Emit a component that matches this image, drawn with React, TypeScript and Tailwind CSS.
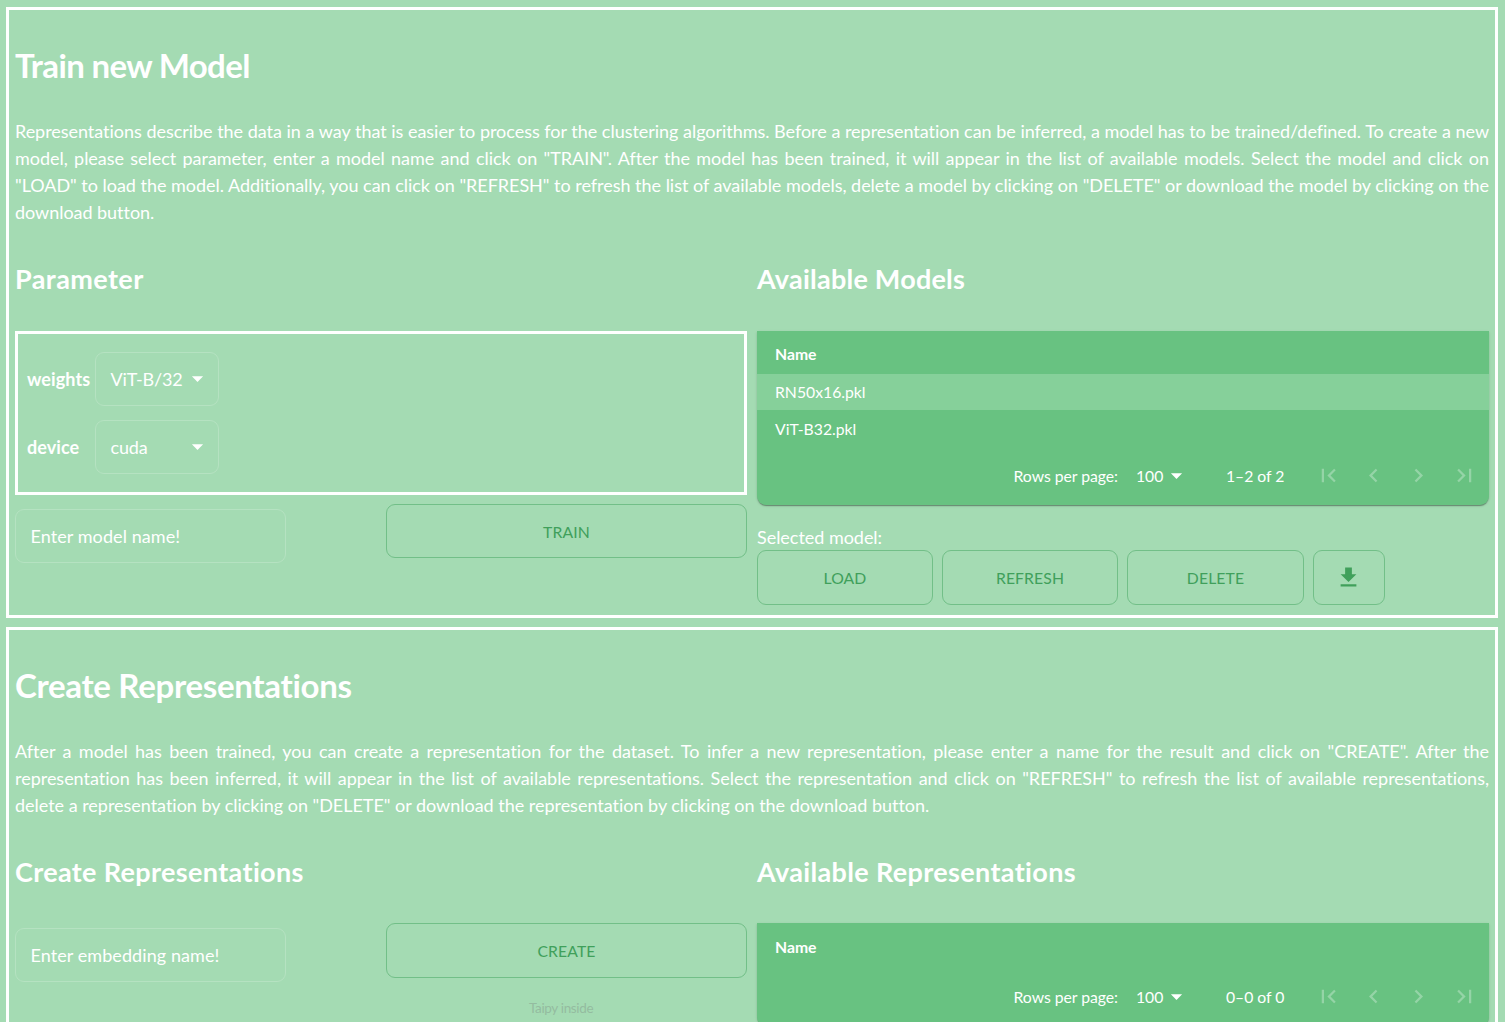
import type { ReactNode } from "react";

const DROP = "M7 10l5 5 5-5z";
const FIRST = "M18.41 16.59L13.82 12l4.59-4.59L17 6l-6 6 6 6zM6 6h2v12H6z";
const PREV = "M15.41 7.41L14 6l-6 6 6 6 1.41-1.41L10.83 12z";
const NEXT = "M10 6L8.59 7.41 13.17 12l-4.58 4.59L10 18l6-6z";
const LAST = "M5.59 7.41L10.18 12l-4.59 4.59L7 18l6-6-6-6zM16 6h2v12h-2z";
const DOWNLOAD = "M19 9h-4V3H9v6H5l7 7 7-7zM5 18v2h14v-2H5z";

function Icon({ d, className = "" }: { d: string; className?: string }) {
  return (
    <svg viewBox="0 0 24 24" className={`size-[27px] shrink-0 fill-current ${className}`}>
      <path d={d} />
    </svg>
  );
}

type PanelProps = { title: string; titleClass: string; text: string; textClass: string; children: ReactNode; className: string };

function Panel({ title, titleClass, text, textClass, children, className }: PanelProps) {
  return (
    <section className={`ml-[6px] w-[1492px] shrink-0 border-[3px] border-white px-[6px] ${className}`}>
      <h1 className={`mt-[30px] h-[50px] text-[33px] leading-[50px] font-bold ${titleClass}`}>{title}</h1>
      <p className={`mt-[28px] text-justify text-[18px] leading-[27px] ${textClass}`}>{text}</p>
      <div className="grid grid-cols-2 gap-x-[10px]">{children}</div>
    </section>
  );
}

function Heading({ children, className }: { children: ReactNode; className: string }) {
  return <h2 className={`mt-[33px] h-[40px] text-[27px] leading-[40px] font-bold ${className}`}>{children}</h2>;
}

function Button({ children, className }: { children: ReactNode; className: string }) {
  return (
    <button className={`flex items-center justify-center rounded-[9px] border border-[#72bf88] pt-px text-[15.75px] tracking-[0.1px] text-[#40a05b] ${className}`}>
      {children}
    </button>
  );
}

function Field({ placeholder, className }: { placeholder: string; className: string }) {
  return (
    <input
      placeholder={placeholder}
      className={`h-[54px] w-[271px] rounded-[9px] border border-[#b5e2c1] px-[14.5px] text-[18px] tracking-[0.08px] text-white outline-none placeholder:text-white ${className}`}
    />
  );
}

function Select({ label, value }: { label: string; value: string }) {
  return (
    <div className="flex h-[54px] items-center">
      <b className="w-[68px] text-[18px] tracking-[0.08px]">{label}</b>
      <div className="flex h-full w-[124px] items-center justify-between rounded-[9px] border border-[#b5e2c1] pr-[7px] pl-[14.5px] text-[18px] tracking-[-0.15px] whitespace-nowrap">
        <span className="w-[72px]">{value}</span>
        <Icon d={DROP} className="mb-[2px]" />
      </div>
    </div>
  );
}

function Table({ rows, range }: { rows: string[]; range: string }) {
  return (
    <div className="rounded-b-[9px] bg-[#68c281] text-[15.75px] shadow-[0_2px_1px_-1px_rgba(0,0,0,0.2),0_1px_1px_0_rgba(0,0,0,0.14),0_1px_3px_0_rgba(0,0,0,0.12)]">
      <div className={`flex items-center px-[18px] font-bold ${rows.length ? "h-[43px] pt-[3px]" : "h-[45px] pt-[3px]"}`}>Name</div>
      {rows.map((row) => (
        <div key={row} className="flex h-[36px] items-center px-[18px] odd:h-[37px] odd:pt-px even:bg-[#86d09a]">
          {row}
        </div>
      ))}
      <div className="flex h-[58px] items-center pr-[11px] pb-px tracking-[-0.03px] whitespace-nowrap">
        <span className="ml-auto pt-px">Rows per page:</span>
        <span className="ml-[18px] w-[27px] pt-px">100</span>
        <Icon d={DROP} />
        <span className="ml-[36px] w-[57px] pt-px text-center">{range}</span>
        <div className="ml-[32px] flex gap-[18px] text-[#95d4a7]">
          <Icon d={FIRST} />
          <Icon d={PREV} />
          <Icon d={NEXT} />
          <Icon d={LAST} className="ml-px" />
        </div>
      </div>
    </div>
  );
}

export default function App() {
  return (
    <main className="relative flex h-[1022px] w-[1505px] flex-col gap-[9px] overflow-hidden bg-[#a4dbb3] pt-[7px] font-['Lato',sans-serif] text-white [font-variant-ligatures:none]">
      <Panel
        className="h-[611px]"
        title="Train new Model"
        titleClass="tracking-[-0.64px]"
        textClass="tracking-[-0.04px]"
        text={
          'Representations describe the data in a way that is easier to process for the clustering algorithms. Before a representation can be inferred, a model has to be trained/defined. To create a new model, please select parameter, enter a model name and click on "TRAIN". After the model has been trained, it will appear in the list of available models. Select the model and click on "LOAD" to load the model. Additionally, you can click on "REFRESH" to refresh the list of available models, delete a model by clicking on "DELETE" or download the model by clicking on the download button.'
        }
      >
        <div>
          <Heading className="mb-[32px] tracking-[0.42px]">Parameter</Heading>
          <div className="flex h-[164px] flex-col gap-[14px] border-[3px] border-white px-[9px] pt-[18px]">
            <Select label="weights" value="ViT-B/32" />
            <Select label="device" value="cuda" />
          </div>
          <div className="mt-[9px] flex items-start justify-between">
            <Field placeholder="Enter model name!" className="mt-[5px]" />
            <Button className="h-[54px] w-[361px]">TRAIN</Button>
          </div>
        </div>
        <div>
          <Heading className="mb-[32px] tracking-[0.23px]">Available Models</Heading>
          <Table rows={["RN50x16.pkl", "ViT-B32.pkl"]} range="1–2 of 2" />
          <div className="mt-[19px] h-[26px] text-[18px] leading-[27px] tracking-[-0.03px]">Selected model:</div>
          <div className="flex gap-[9px]">
            <Button className="h-[55px] w-[176px]">LOAD</Button>
            <Button className="h-[55px] w-[176px]">REFRESH</Button>
            <Button className="h-[55px] w-[177px]">DELETE</Button>
            <Button className="h-[55px] w-[72px] pr-[2px] pb-[2px]">
              <Icon d={DOWNLOAD} />
            </Button>
          </div>
        </div>
      </Panel>
      <Panel
        className="h-[500px]"
        title="Create Representations"
        titleClass="tracking-[-0.31px]"
        textClass="tracking-[-0.02px]"
        text={
          'After a model has been trained, you can create a representation for the dataset. To infer a new representation, please enter a name for the result and click on "CREATE". After the representation has been inferred, it will appear in the list of available representations. Select the representation and click on "REFRESH" to refresh the list of available representations, delete a representation by clicking on "DELETE" or download the representation by clicking on the download button.'
        }
      >
        <div>
          <Heading className="mb-[31px] tracking-[0.35px]">Create Representations</Heading>
          <div className="flex items-start justify-between">
            <Field placeholder="Enter embedding name!" className="mt-[5px]" />
            <Button className="h-[55px] w-[361px]">CREATE</Button>
          </div>
        </div>
        <div>
          <Heading className="mb-[31px] tracking-[0.35px]">Available Representations</Heading>
          <Table rows={[]} range="0–0 of 0" />
        </div>
      </Panel>
      <div className="absolute top-[998px] left-[529px] text-[13.5px] leading-[20px] tracking-[-0.35px] text-[#94bca0]">Taipy inside</div>
    </main>
  );
}
